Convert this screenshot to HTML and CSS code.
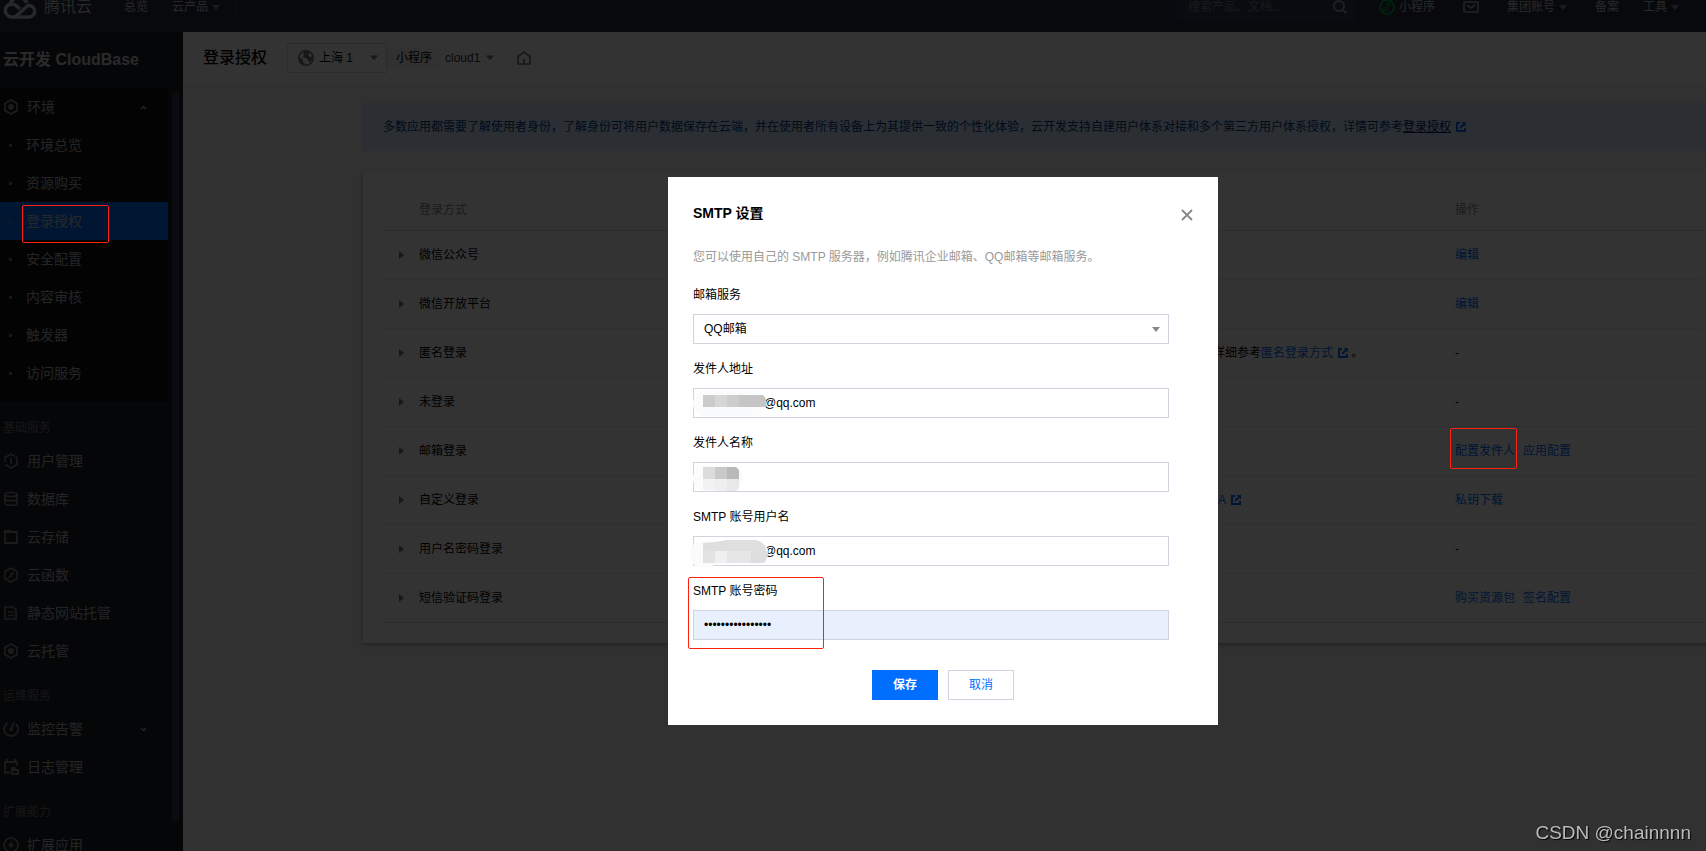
FILE: index.html
```html
<!DOCTYPE html>
<html lang="zh-CN">
<head>
<meta charset="utf-8">
<title>登录授权 - 云开发 CloudBase</title>
<link rel="stylesheet" href="styles.css">
</head>
<body>
<svg class="defs" width="0" height="0" aria-hidden="true">
  <symbol id="ext" viewBox="0 0 10 10"><path d="M4 1H1v8h8V6" fill="none" stroke="currentColor" stroke-width="2"/><path d="M5.500 0H10v4.500z" fill="currentColor"/><path d="M8 2 4 6" fill="none" stroke="currentColor" stroke-width="2"/></symbol>
  <symbol id="caret" viewBox="0 0 8 5"><path d="M0 0h8L4 5z" fill="currentColor"/></symbol>
  <symbol id="hex" viewBox="0 0 16 16"><path d="M8 1l6 3.500v7L8 15l-6-3.500v-7z" fill="none" stroke="currentColor" stroke-width="1.800"/><circle cx="8" cy="8" r="3" fill="currentColor"/></symbol>
</svg>

<header class="topbar">
  <nav class="top-left">
    <a class="logo" href="#">
      <svg width="34" height="24" viewBox="0 0 34 24"><path d="M12 22 25 10.500a5.800 5.800 0 1 1 1.500 11.500H9A6.500 6.500 0 1 1 13 10.500l4 3.500M7 9.500A9 9 0 0 1 24 8" fill="none" stroke="currentColor" stroke-width="3.400"/></svg>
      <span>腾讯云</span>
    </a>
    <a href="#">总览</a>
    <a class="with-caret" href="#">云产品 <svg width="8" height="5"><use href="#caret"/></svg></a>
    <span class="divider"></span>
  </nav>
  <nav class="top-right">
    <div class="search">
      <input type="text" aria-label="搜索" placeholder="搜索产品、文档...">
      <svg width="14" height="14" viewBox="0 0 14 14"><circle cx="6" cy="6" r="5" fill="none" stroke="currentColor" stroke-width="1.800"/><path d="m9.500 9.500 4 4" stroke="currentColor" stroke-width="2"/></svg>
    </div>
    <a class="with-caret" href="#"><svg class="mini" width="16" height="16" viewBox="0 0 16 16"><circle cx="8" cy="8" r="7" fill="none" stroke="currentColor" stroke-width="1.800"/><path d="M5.800 8.500a1.800 1.800 0 1 0 2.200 1.700V5.800A1.800 1.800 0 1 1 10.200 7.500" fill="none" stroke="currentColor" stroke-width="1.400"/></svg>小程序</a>
    <a class="mail" href="#" aria-label="消息"><svg width="16" height="12" viewBox="0 0 16 12"><path d="M1 1h14v10H1zM4 4l4 3 4-3" fill="none" stroke="currentColor" stroke-width="1.600"/></svg></a>
    <a class="with-caret account" href="#">集团账号 <svg width="8" height="5"><use href="#caret"/></svg></a>
    <a href="#">备案</a>
    <a class="with-caret" href="#">工具 <svg width="8" height="5"><use href="#caret"/></svg></a>
  </nav>
</header>

<div class="layout">
  <aside class="sidebar">
    <div class="menu">
      <h2 class="product">云开发 CloudBase</h2>
      <div class="submenu">
        <a class="item" href="#"><svg width="16" height="16"><use href="#hex"/></svg>环境<svg class="chev" width="7" height="5" viewBox="0 0 7 5"><path d="M1 4l2.500-2.500L6 4" fill="none" stroke="currentColor" stroke-width="1.500"/></svg></a>
        <a class="item sub" href="#">环境总览</a>
        <a class="item sub" href="#">资源购买</a>
        <a class="item sub active" href="#">登录授权<span class="mark mark-nav"></span></a>
        <a class="item sub" href="#">安全配置</a>
        <a class="item sub" href="#">内容审核</a>
        <a class="item sub" href="#">触发器</a>
        <a class="item sub" href="#">访问服务</a>
      </div>
      <div class="group">基础服务</div>
      <a class="item" href="#"><svg width="16" height="16" viewBox="0 0 16 16"><path d="M2 9V4.500L8 1l3.500 2M14 5v6.500L8 15l-6-3.500M8 5v6M12.500 3.500l1.500 1" fill="none" stroke="currentColor" stroke-width="1.700"/></svg>用户管理</a>
      <a class="item" href="#"><svg width="16" height="16" viewBox="0 0 16 16"><path d="M2 3.500v9c0 2.500 12 2.500 12 0v-9M2 8c0 2.300 12 2.300 12 0" fill="none" stroke="currentColor" stroke-width="1.700"/><ellipse cx="8" cy="3.500" rx="6" ry="2" fill="none" stroke="currentColor" stroke-width="1.700"/></svg>数据库</a>
      <a class="item" href="#"><svg width="16" height="16" viewBox="0 0 16 16"><path d="M2 3h12v11H2z" fill="none" stroke="currentColor" stroke-width="1.800"/><path d="M1 1h6l2 3H1z" fill="currentColor"/></svg>云存储</a>
      <a class="item" href="#"><svg width="16" height="16" viewBox="0 0 16 16"><path d="M8 1l6 3.500v7L8 15l-6-3.500v-7zM10 5l-4 6" fill="none" stroke="currentColor" stroke-width="1.700"/></svg>云函数</a>
      <a class="item" href="#"><svg width="16" height="16" viewBox="0 0 16 16"><path d="M2 2h8l3 3v9H2zM5 7h6M5 10.500h6" fill="none" stroke="currentColor" stroke-width="1.700"/></svg>静态网站托管</a>
      <a class="item" href="#"><svg width="16" height="16"><use href="#hex"/></svg>云托管</a>
      <div class="group">运维服务</div>
      <a class="item" href="#"><svg width="16" height="16" viewBox="0 0 16 16"><path d="M4.500 2A7 7 0 1 0 13 3M7.500 9.500 11 2" fill="none" stroke="currentColor" stroke-width="1.800"/><circle cx="8" cy="8.500" r="1.800" fill="currentColor"/></svg>监控告警<svg class="chev" width="7" height="5" viewBox="0 0 7 5"><path d="M1 1l2.500 2.500L6 1" fill="none" stroke="currentColor" stroke-width="1.500"/></svg></a>
      <a class="item" href="#"><svg width="16" height="16" viewBox="0 0 16 16"><path d="M7 13.500H2V3h12v4M4 0v3M12 0v3" fill="none" stroke="currentColor" stroke-width="1.800"/><path d="M8 8h4l1 2h3v6H8zM10 12v2h4v-2z" fill="currentColor" fill-rule="evenodd"/></svg>日志管理</a>
      <div class="group">扩展能力</div>
      <a class="item" href="#"><svg width="16" height="16" viewBox="0 0 16 16"><circle cx="8" cy="8" r="7" fill="none" stroke="currentColor" stroke-width="1.700"/><path d="M9 3 5 9h2.500L7 13l4-6H8.500z" fill="currentColor"/></svg>扩展应用</a>
    </div>
    <span class="thumb"></span>
  </aside>

  <main class="main">
    <div class="page-head">
      <h1>登录授权</h1>
      <button class="region" type="button">
        <svg width="16" height="16" viewBox="0 0 16 16"><circle cx="8" cy="8" r="7.200" fill="none" stroke="currentColor" stroke-width="1.600"/><path d="M1 7l4 3v2l3 3-4-1-3-4zM7 1l-2 3 1 2-2 1 4 1 3 3v2l3-3 1-4-3 1-2-2 2-3z" fill="currentColor"/></svg>
        <span>上海 1</span><svg width="8" height="6"><use href="#caret"/></svg>
      </button>
      <span class="tag">小程序</span>
      <button class="env" type="button">cloud1 <svg width="8" height="6"><use href="#caret"/></svg></button>
      <a class="home" href="#" aria-label="首页"><svg width="14" height="14" viewBox="0 0 14 14"><path d="M1 13V5.500L7 1l6 4.500V13zM7 13V8" fill="none" stroke="currentColor" stroke-width="1.700"/></svg></a>
    </div>
    <div class="content">
      <p class="alert">多数应用都需要了解使用者身份，了解身份可将用户数据保存在云端，并在使用者所有设备上为其提供一致的个性化体验，云开发支持自建用户体系对接和多个第三方用户体系授权，详情可参考<a href="#">登录授权</a><svg class="ext" width="10" height="10"><use href="#ext"/></svg></p>
      <section class="card">
        <table>
          <colgroup><col class="c-arrow"><col><col class="c-desc"><col class="c-ops"></colgroup>
          <thead><tr><th></th><th>登录方式</th><th></th><th>操作</th></tr></thead>
          <tbody>
            <tr><td><i class="tri"></i></td><td>微信公众号</td><td></td><td><a href="#">编辑</a></td></tr>
            <tr><td><i class="tri"></i></td><td>微信开放平台</td><td></td><td><a href="#">编辑</a></td></tr>
            <tr><td><i class="tri"></i></td><td>匿名登录</td><td>详细参考<a href="#">匿名登录方式<svg class="ext" width="10" height="10"><use href="#ext"/></svg></a> 。</td><td>-</td></tr>
            <tr><td><i class="tri"></i></td><td>未登录</td><td></td><td>-</td></tr>
            <tr><td><i class="tri"></i></td><td>邮箱登录</td><td></td><td><a class="marked" href="#">配置发件人<span class="mark mark-ops"></span></a><a href="#">应用配置</a></td></tr>
            <tr><td><i class="tri"></i></td><td>自定义登录</td><td><a class="doc" href="#">A<svg class="ext" width="10" height="10"><use href="#ext"/></svg></a></td><td><a href="#">私钥下载</a></td></tr>
            <tr><td><i class="tri"></i></td><td>用户名密码登录</td><td></td><td>-</td></tr>
            <tr><td><i class="tri"></i></td><td>短信验证码登录</td><td></td><td><a href="#">购买资源包</a><a href="#">签名配置</a></td></tr>
          </tbody>
        </table>
      </section>
    </div>
  </main>
</div>

<div class="overlay">
  <form class="modal" role="dialog" aria-labelledby="dlg-title">
    <div class="modal-head">
      <h3 id="dlg-title">SMTP 设置</h3>
      <button class="close" type="button" aria-label="关闭"><svg width="12" height="12" viewBox="0 0 12 12"><path d="M1 1l10 10M11 1 1 11" stroke="currentColor" stroke-width="1.800"/></svg></button>
    </div>
    <div class="fields">
      <p class="desc">您可以使用自己的 SMTP 服务器，例如腾讯企业邮箱、QQ邮箱等邮箱服务。</p>
      <div class="field">
        <label for="service">邮箱服务</label>
        <div class="control">
          <select id="service"><option>QQ邮箱</option></select>
          <svg class="select-caret" width="8" height="5"><use href="#caret"/></svg>
        </div>
      </div>
      <div class="field">
        <label for="addr">发件人地址</label>
        <div class="control">
          <input id="addr" class="masked" type="text" value="@qq.com">
          <svg class="mosaic" width="80" height="34" viewBox="0 0 80 34"><rect x="2" y="5" width="72" height="25" rx="12" fill="#fafbfc"/><path d="M12 9h12v12H12z" fill="#cbcbcb"/><path d="M24 9h12v12H24z" fill="#d6d6d6"/><path d="M36 9h12v12H36z" fill="#cdcdcd"/><path d="M48 9h24l3 4v8H48z" fill="#c5c5c5"/></svg>
        </div>
      </div>
      <div class="field">
        <label for="name">发件人名称</label>
        <div class="control">
          <input id="name" type="text">
          <svg class="mosaic" width="80" height="34" viewBox="0 0 80 34"><rect x="2" y="6" width="50" height="25" rx="12" fill="#fbfbfb"/><path d="M12 7h12v12H12z" fill="#dcdcdc"/><path d="M24 7h12v12H24z" fill="#c9c9c9"/><path d="M36 7h9l3 3v9H36z" fill="#b9b9b9"/><path d="M12 19h12v11H12z" fill="#f2f2f2"/><path d="M24 19h12v12H24z" fill="#efefef"/><path d="M36 19h12v9l-3 3h-9z" fill="#e8e8e8"/></svg>
        </div>
      </div>
      <div class="field">
        <label for="user">SMTP 账号用户名</label>
        <div class="control">
          <input id="user" class="masked" type="text" value="@qq.com">
          <svg class="mosaic" width="80" height="34" viewBox="0 0 80 34"><path d="M0 14Q2 8 12 8L36 6h30q11 3 11 12-1 8-8 10l-40 2-12 3H6Q0 30 0 24z" fill="#fbfbfb"/><path d="M12 9l12-1 12-2h28q8 1 11 8v3H12z" fill="#dfdfdf"/><path d="M12 17h12v12H12z" fill="#e3e3e3"/><path d="M24 17h12v12H24z" fill="#f0f0f0"/><path d="M36 17h24v12H36z" fill="#e6e6e6"/><path d="M60 17h17q1 6-3 11l-2 1H60z" fill="#dedede"/></svg>
        </div>
      </div>
      <div class="field">
        <label for="pwd">SMTP 账号密码</label>
        <div class="control"><input id="pwd" class="autofilled" type="password" value="abcdefghijklmnop"></div>
        <span class="mark mark-pwd"></span>
      </div>
    </div>
    <div class="actions">
      <button class="btn primary" type="button">保存</button>
      <button class="btn" type="button">取消</button>
    </div>
  </form>
</div>
<div class="watermark">CSDN @chainnnn</div>
</body>
</html>
```
FILE: styles.css
```css
* { box-sizing: border-box; }
body {
  margin: 0;
  height: 100vh;
  overflow: hidden;
  display: flex;
  flex-direction: column;
  font: 12px/20px "Liberation Sans", "Noto Sans CJK SC", sans-serif;
  color: #000;
  background: #f2f2f2;
}
a { color: #006eff; text-decoration: none; }
h1, h2, h3, p { margin: 0; }
button, input, select { font: inherit; color: inherit; border-radius: 0; }
button { padding: 0; border: 0; background: none; }
svg { flex: none; }
.defs { position: absolute; }

/* top navigation, scrolled slightly out of view */
.topbar {
  flex: none;
  display: flex;
  justify-content: space-between;
  height: 50px;
  margin-top: -18px;
  background: #262f3e;
}
.topbar a { color: #c4c8d0; }
.top-left, .top-right { display: flex; align-items: center; gap: 24px; }
.top-left { padding-left: 3px; }
.top-right { padding-right: 27px; }
.logo { display: flex; align-items: center; gap: 7px; margin-right: 8px; font-size: 16px; }
.with-caret { display: flex; align-items: center; gap: 4px; }
.with-caret svg { color: #7d828c; }
.with-caret .mini { color: #00a843; }
.divider { width: 1px; height: 24px; margin-left: -8px; background: #3c4554; }
.search {
  display: flex;
  align-items: center;
  width: 180px;
  height: 30px;
  margin-right: -2px;
  padding: 0 10px 0 11px;
  background: #2c3a4a;
  color: #9a9fa8;
}
.search input { flex: 1; min-width: 0; padding: 0; border: 0; background: none; }
.search input::placeholder { color: #7b828d; opacity: 1; }
.mail { display: flex; margin: 0 4px; }
.mail svg { color: #a9adb5; }
.account { margin-right: 4px; }

.layout { flex: 1; min-height: 0; display: flex; }

/* side menu */
.sidebar {
  flex: none;
  display: flex;
  justify-content: space-between;
  width: 183px;
  padding-right: 4px;
  overflow: hidden;
  background: #1b1e26;
}
.menu { width: 168px; }
.thumb { width: 7px; margin: 60px 0 29px; background: #2f3848; }
.product { height: 56px; padding-left: 3px; font-size: 16px; line-height: 56px; color: #cfcfcf; }
.submenu { padding-bottom: 10px; background: #101216; }
.item {
  display: flex;
  align-items: center;
  gap: 8px;
  height: 38px;
  padding: 0 21px 0 3px;
  font-size: 14px;
  color: #b4b4b4;
}
.item svg { color: #858585; }
.item .chev { margin-left: auto; color: #b4b4b4; }
.sub { position: relative; gap: 14px; padding-left: 9px; }
.sub::before { content: ""; width: 3px; height: 3px; background: #7a7a7a; }
.active { background: #006eff; color: #c8c8c8; }
.group { height: 40px; padding: 12px 0 0 3px; line-height: 28px; color: #707070; }

/* page */
.main { flex: 1; min-width: 0; overflow: hidden; }
.page-head {
  display: flex;
  align-items: center;
  height: 51px;
  padding-left: 20px;
  background: #fff;
}
.page-head h1 { margin-right: 20px; font-size: 16px; font-weight: 500; }
.region {
  display: flex;
  align-items: center;
  gap: 5px;
  width: 100px;
  height: 30px;
  padding: 0 8px 0 10px;
  border: 1px solid #ddd;
}
.region span { margin-right: auto; }
.region svg, .env svg, .home { color: #777; }
.tag { padding: 0 9px; background: #f5f5f5; }
.env { display: flex; align-items: center; gap: 6px; margin: 0 23px 0 4px; color: #333; }
.home { display: flex; }
/* the content column runs past the right window edge */
.content { margin: 20px -17px 0 180px; }
.alert { height: 48px; padding: 14px 20px; background: #d5e7ff; color: #003b80; white-space: nowrap; }
.alert a { color: #002060; text-decoration: underline; }
.alert svg { color: #006eff; }
.ext { margin-left: 5px; vertical-align: -1px; }
.card {
  margin-top: 20px;
  padding: 20px;
  background: #fff;
  box-shadow: 0 2px 4px rgba(0, 0, 0, .3);
}
table { width: 100%; table-layout: fixed; border-collapse: collapse; }
th, td { padding: 0; text-align: left; white-space: nowrap; border-bottom: 1px solid #eaeaea; }
th { height: 39px; font-weight: normal; color: #888; border-color: #ddd; }
td { height: 49px; }
tr:last-child td { border-color: #ddd; }
td a + a { margin-left: 8px; }
.c-arrow { width: 36px; }
.c-desc { width: 242px; }
.c-ops { width: 248px; }
.tri {
  display: block;
  width: 5px;
  margin-left: 16px;
  border: solid transparent;
  border-width: 4px 0 4px 5px;
  border-left-color: #777;
}
.doc { padding-left: 5px; }
.marked { position: relative; }

/* highlight frames drawn above the overlay */
.mark {
  position: absolute;
  z-index: 20;
  border: 1px solid #ff2010;
  border-radius: 2px;
  pointer-events: none;
}
.mark-nav { left: 22px; top: 3px; width: 87px; height: 38px; }
.mark-ops { left: -5px; top: -16px; width: 67px; height: 41px; }
.mark-pwd { left: -5px; top: -4px; width: 136px; height: 72px; }

/* dialog */
.overlay {
  position: fixed;
  inset: 0;
  z-index: 10;
  display: grid;
  place-content: center;
  padding: 51px 0 0 180px;
  background: rgba(0, 0, 0, .8);
}
.modal { width: 550px; padding: 26px 25px 25px; background: #fff; }
.modal-head { display: flex; align-items: center; justify-content: space-between; height: 20px; }
.modal-head h3 { font-size: 14px; }
.close { display: flex; padding-top: 3px; color: #888; }
.fields { padding: 24px 24px 0 0; }
.desc { margin-bottom: 18px; color: #999; }
.field { position: relative; margin-bottom: 15px; }
.field label { display: block; margin-bottom: 9px; }
.control { position: relative; height: 30px; }
.control input, .control select {
  display: block;
  width: 100%;
  height: 30px;
  padding: 0 10px;
  border: 1px solid #cfd5de;
  background: #fff;
  outline: 0;
  appearance: none;
}
.control .masked { padding-left: 70px; }
.control .autofilled { background: #e8f0fe; }
.select-caret { position: absolute; right: 9px; top: 13px; color: #888; }
.mosaic { position: absolute; left: -2px; top: -2px; }
.actions { display: flex; justify-content: center; gap: 10px; margin-top: 30px; }
.btn { width: 66px; height: 30px; border: 1px solid #cfd5de; background: #fff; color: #006eff; }
.primary { border-color: #006eff; background: #006eff; color: #fff; font-weight: bold; }
.field:last-child { margin-bottom: 0; }

.watermark {
  position: fixed;
  right: 15px;
  bottom: 4px;
  z-index: 30;
  font: 19px/28px "Liberation Sans", sans-serif;
  color: #bbb;
  text-shadow: 1px 1px 1px #000;
}
```
